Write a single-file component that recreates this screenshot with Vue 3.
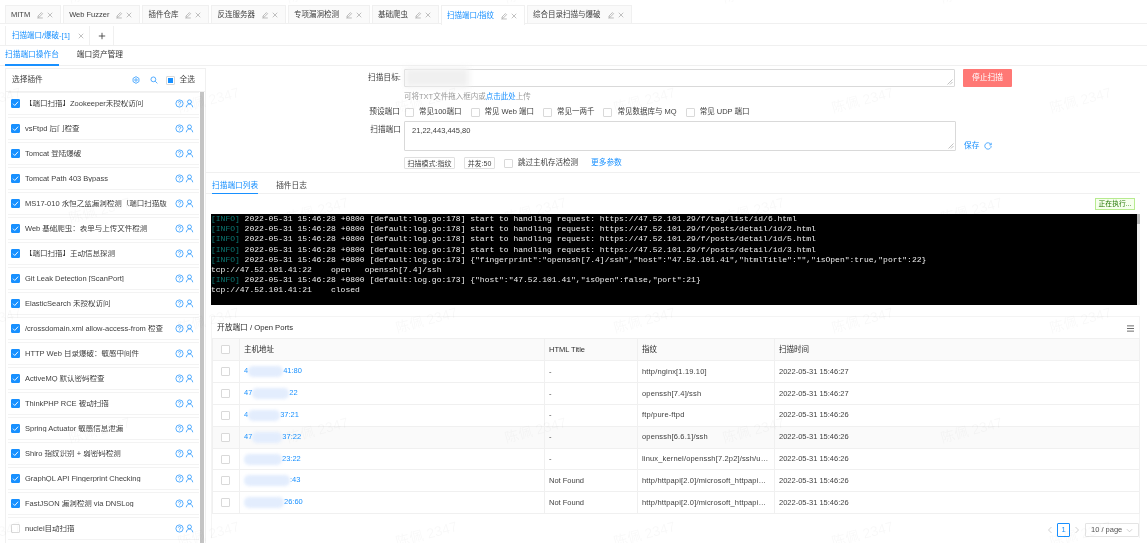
<script setup>
const navTabs = [
  { name: 'MITM' },
  { name: 'Web Fuzzer' },
  { name: '插件仓库' },
  { name: '反连服务器' },
  { name: '专项漏洞检测' },
  { name: '基础爬虫' },
  { name: '扫描端口/指纹', active: true },
  { name: '综合目录扫描与爆破' },
];

const plugins = [
  { name: '【端口扫描】Zookeeper未授权访问', on: true },
  { name: 'vsFtpd 后门检查', on: true },
  { name: 'Tomcat 登陆爆破', on: true },
  { name: 'Tomcat Path 403 Bypass', on: true },
  { name: 'MS17-010 永恒之蓝漏洞检测（端口扫描版', on: true },
  { name: 'Web 基础爬虫：表单与上传文件检测', on: true },
  { name: '【端口扫描】主动信息探测', on: true },
  { name: 'Git Leak Detection [ScanPort]', on: true },
  { name: 'ElasticSearch 未授权访问', on: true },
  { name: '/crossdomain.xml allow-access-from 检查', on: true },
  { name: 'HTTP Web 目录爆破：敏感中间件', on: true },
  { name: 'ActiveMQ 默认密码检查', on: true },
  { name: 'ThinkPHP RCE 被动扫描', on: true },
  { name: 'Spring Actuator 敏感信息泄漏', on: true },
  { name: 'Shiro 指纹识别 + 弱密码检测', on: true },
  { name: 'GraphQL API Fingerprint Checking', on: true },
  { name: 'FastJSON 漏洞检测 via DNSLog', on: true },
  { name: 'nuclei自动扫描', on: false },
];

const presets = ['常见100端口', '常见 Web 端口', '常见一两千', '常见数据库与 MQ', '常见 UDP 端口'];

const logHead = '2022-05-31 15:46:28 +0800 ';
const logs = [
  { info: true, text: logHead + '[default:log.go:178] start to handling request: https://47.52.101.29/f/tag/list/id/6.html' },
  { info: true, text: logHead + '[default:log.go:178] start to handling request: https://47.52.101.29/f/posts/detail/id/2.html' },
  { info: true, text: logHead + '[default:log.go:178] start to handling request: https://47.52.101.29/f/posts/detail/id/5.html' },
  { info: true, text: logHead + '[default:log.go:178] start to handling request: https://47.52.101.29/f/posts/detail/id/3.html' },
  { info: true, text: logHead + '[default:log.go:173] {"fingerprint":"openssh[7.4]/ssh","host":"47.52.101.41","htmlTitle":"","isOpen":true,"port":22}' },
  { text: 'tcp://47.52.101.41:22    open   openssh[7.4]/ssh' },
  { info: true, text: logHead + '[default:log.go:173] {"host":"47.52.101.41","isOpen":false,"port":21}' },
  { text: 'tcp://47.52.101.41:21    closed' },
];

const ports = [
  { pre: '4', blob: 35, post: '41:80', title: '-', fp: 'http/nginx[1.19.10]', time: '2022-05-31 15:46:27' },
  { pre: '47', blob: 37, post: '22', title: '-', fp: 'openssh[7.4]/ssh', time: '2022-05-31 15:46:27' },
  { pre: '4', blob: 32, post: '37:21', title: '-', fp: 'ftp/pure-ftpd', time: '2022-05-31 15:46:26' },
  { pre: '47', blob: 30, post: '37:22', title: '-', fp: 'openssh[6.6.1]/ssh', time: '2022-05-31 15:46:26', hover: true },
  { pre: '', blob: 38, post: '23:22', title: '-', fp: 'linux_kernel/openssh[7.2p2]/ssh/ubuntu', time: '2022-05-31 15:46:26' },
  { pre: '', blob: 46, post: ':43', title: 'Not Found', fp: 'http/httpapi[2.0]/microsoft_httpapi_httpd', time: '2022-05-31 15:46:26' },
  { pre: '', blob: 40, post: '26:60', title: 'Not Found', fp: 'http/httpapi[2.0]/microsoft_httpapi_httpd', time: '2022-05-31 15:46:26' },
];

// watermark tiles, every other row is shifted by half a tile
const marks = [];
[-17, 93, 203, 313, 423, 527].forEach((y, row) => {
  const start = row % 2 === 0 ? -150 : -41;
  for (let x = start; x < 1147; x += 218) marks.push({ x, y });
});
</script>

<template>
  <div class="page">
    <div class="nav-tabs">
      <div v-for="tab in navTabs" :key="tab.name" class="nav-tab" :class="{ active: tab.active }">
        <span class="nav-name">{{ tab.name }}</span>
        <svg class="ic-edit" viewBox="0 0 10 10"><path d="M1.5 8.7h7M2.5 6.3 6.8 2l1.4 1.4-4.3 4.3H2.5z" /></svg>
        <svg class="ic-close" viewBox="0 0 8 8"><path d="M1 1l6 6M7 1 1 7" /></svg>
      </div>
    </div>

    <div class="sub-tabs">
      <div class="sub-tab">
        <span>扫描端口/爆破-[1]</span>
        <svg class="ic-close" viewBox="0 0 8 8"><path d="M1 1l6 6M7 1 1 7" /></svg>
      </div>
      <div class="sub-add">
        <svg viewBox="0 0 8 8"><path d="M4 .8v6.4M.8 4h6.4" /></svg>
      </div>
    </div>

    <div class="inner-tabs">
      <div class="inner-tab active">扫描端口操作台</div>
      <div class="inner-tab">端口资产管理</div>
    </div>

    <div class="body">
      <aside class="plugins">
        <div class="plugins-head">
          <span class="plugins-title">选择插件</span>
          <svg class="ic-gear" viewBox="0 0 10 10"><path d="M5 .8 8.7 3v4L5 9.2 1.3 7V3z" /><circle cx="5" cy="5" r="1.5" /></svg>
          <svg class="ic-search" viewBox="0 0 10 10"><circle cx="4.2" cy="4.2" r="3" /><path d="M6.5 6.5 9.2 9.2" /></svg>
          <span class="check partial"></span>
          <span class="all">全选</span>
        </div>
        <div class="plugins-body">
          <div class="plugin-list">
            <div v-for="p in plugins" :key="p.name" class="plugin">
              <span class="check" :class="{ on: p.on }">
                <svg v-if="p.on" viewBox="0 0 10 10"><path d="M2.2 5.2 4.2 7.2 7.9 3" /></svg>
              </span>
              <span class="plugin-name">{{ p.name }}</span>
              <svg class="ic-help" viewBox="0 0 10 10"><circle cx="5" cy="5" r="4" /><path d="M3.7 4c.1-1.7 2.7-1.7 2.7 0 0 1-1.4 1-1.4 2.2M5 7.2v.4" /></svg>
              <svg class="ic-user" viewBox="0 0 10 10"><circle cx="5" cy="3.2" r="2.2" /><path d="M1.4 9.2C1.8 6.6 3.2 5.6 5 5.6s3.2 1 3.6 3.6" /></svg>
            </div>
          </div>
          <div class="plugin-scroll"></div>
        </div>
      </aside>

      <main class="main">
        <section class="form">
          <div class="row row-target">
            <label class="lbl">扫描目标:</label>
            <div class="input target">
              <span class="target-blob"></span>
              <svg class="grip" viewBox="0 0 6 6"><path d="M5.5.5l-5 5M5.5 3l-2.5 2.5" /></svg>
            </div>
            <button class="stop">停止扫描</button>
          </div>
          <div class="hint">可将TXT文件拖入框内或<a>点击此处</a>上传</div>
          <div class="row row-preset">
            <label class="lbl">预设端口</label>
            <div v-for="name in presets" :key="name" class="preset">
              <span class="check"></span>
              <span>{{ name }}</span>
            </div>
          </div>
          <div class="row row-ports">
            <label class="lbl">扫描端口</label>
            <div class="input ports">
              21,22,443,445,80
              <svg class="grip" viewBox="0 0 6 6"><path d="M5.5.5l-5 5M5.5 3l-2.5 2.5" /></svg>
            </div>
            <a class="save">保存</a>
            <svg class="ic-reload" viewBox="0 0 10 10"><path d="M8.6 3.2A4 4 0 1 0 9 5" /><path d="M9 1v2.6H6.6" /></svg>
          </div>
          <div class="row row-opts">
            <span class="tag-btn mode">扫描模式:指纹</span>
            <span class="tag-btn conc">并发:50</span>
            <span class="check skip-check"></span>
            <span class="skip">跳过主机存活检测</span>
            <a class="more">更多参数</a>
          </div>
        </section>

        <div class="result-tabs">
          <div class="result-tab active">扫描端口列表</div>
          <div class="result-tab">插件日志</div>
        </div>

        <div class="status"><span class="running">正在执行...</span></div>

        <div class="term-wrap">
          <div class="term">
            <div v-for="(l, i) in logs" :key="i" class="term-line"><span v-if="l.info" class="term-info">[INFO] </span>{{ l.text }}</div>
          </div>
          <div class="term-scroll"><span></span></div>
        </div>

        <section class="card">
          <div class="card-head">
            <span>开放端口 / Open Ports</span>
            <svg class="ic-menu" viewBox="0 0 10 8"><path d="M1 1h8M1 4h8M1 7h8" /></svg>
          </div>
          <table class="grid">
            <colgroup>
              <col style="width: 27px" />
              <col style="width: 305px" />
              <col style="width: 93px" />
              <col style="width: 137px" />
              <col />
            </colgroup>
            <thead>
              <tr>
                <th><span class="check"></span></th>
                <th>主机地址</th>
                <th>HTML Title</th>
                <th>指纹</th>
                <th>扫描时间</th>
              </tr>
            </thead>
            <tbody>
              <tr v-for="(r, i) in ports" :key="i" :class="{ hover: r.hover }">
                <td><span class="check"></span></td>
                <td class="host">{{ r.pre }}<span class="blob" :style="{ width: r.blob + 'px' }"></span>{{ r.post }}</td>
                <td>{{ r.title }}</td>
                <td class="fp">{{ r.fp }}</td>
                <td>{{ r.time }}</td>
              </tr>
            </tbody>
          </table>
          <div class="pager">
            <svg class="ic-page" viewBox="0 0 6 8"><path d="M4.5 1 1.5 4l3 3" /></svg>
            <span class="page-no">1</span>
            <svg class="ic-page" viewBox="0 0 6 8"><path d="M1.5 1l3 3-3 3" /></svg>
            <div class="page-size">
              <span>10 / page</span>
              <svg viewBox="0 0 8 5"><path d="M1 1l3 3 3-3" /></svg>
            </div>
          </div>
        </section>
      </main>
    </div>

    <div class="marks">
      <span v-for="(m, i) in marks" :key="i" class="mark" :style="{ left: m.x + 'px', top: m.y + 'px' }">陈佩 2347</span>
    </div>
  </div>
</template>

<style scoped>
.page {
  position: relative;
  width: 1147px;
  height: 543px;
  overflow: hidden;
  background: #fff;
  color: rgba(0, 0, 0, 0.78);
  font-family: "Liberation Sans", "Noto Sans CJK SC", sans-serif;
  font-size: 7.5px;
  line-height: 1;
  filter: blur(0.25px);
}

svg {
  fill: none;
  stroke: currentColor;
  flex: none;
}

a {
  color: #1890ff;
}

.nav-tabs {
  display: flex;
  gap: 2px;
  height: 24px;
  padding: 5px 0 0 5px;
  box-sizing: border-box;
  border-bottom: 1px solid #f0f0f0;
}

.nav-tab {
  display: flex;
  align-items: center;
  padding: 0 7px 0 5px;
  background: #fafafa;
  border: 1px solid #f0f0f0;
  border-bottom: 0;
  color: rgba(0, 0, 0, 0.78);
}

.nav-tab.active {
  background: #fff;
  color: #1890ff;
  height: 19px;
}

.nav-name {
  margin-right: 6px;
}

.ic-edit {
  width: 8px;
  height: 8px;
  margin-right: 3px;
  color: #999;
  stroke-width: 0.8;
}

.ic-close {
  width: 6px;
  height: 6px;
  color: #999;
  stroke-width: 0.8;
}

.sub-tabs {
  display: flex;
  gap: 1px;
  height: 22px;
  padding: 2px 0 0 5px;
  border-bottom: 1px solid #f0f0f0;
  box-sizing: border-box;
}

.sub-tab {
  display: flex;
  align-items: center;
  gap: 8px;
  width: 85px;
  padding-left: 6px;
  box-sizing: border-box;
  color: #1890ff;
  border: 1px solid #f0f0f0;
  border-width: 0 1px;
}

.sub-add {
  display: flex;
  align-items: center;
  justify-content: center;
  width: 22px;
  color: #333;
  border-right: 1px solid #f0f0f0;
}

.sub-add svg {
  width: 8px;
  height: 8px;
  stroke-width: 0.8;
}

.inner-tabs {
  display: flex;
  height: 20px;
  padding-left: 5px;
  gap: 18px;
  box-sizing: border-box;
  border-bottom: 1px solid #f0f0f0;
}

.inner-tab {
  display: flex;
  align-items: center;
  font-size: 7.7px;
  color: rgba(0, 0, 0, 0.82);
  padding-bottom: 1px;
}

.inner-tab.active {
  color: #1890ff;
  border-bottom: 2px solid #1890ff;
  margin-bottom: -1px;
  padding-bottom: 0;
}

.body {
  display: flex;
  height: 477px;
  padding-top: 2px;
  box-sizing: border-box;
}

.check {
  display: inline-flex;
  align-items: center;
  justify-content: center;
  flex: none;
  width: 9px;
  height: 9px;
  box-sizing: border-box;
  border: 1px solid #d9d9d9;
  border-radius: 1px;
  background: #fff;
}

.check.on {
  background: #1890ff;
  border-color: #1890ff;
}

.check svg {
  width: 9px;
  height: 9px;
  color: #fff;
  stroke-width: 1;
}

.check.partial::after {
  content: "";
  width: 5px;
  height: 5px;
  background: #1890ff;
}

.plugins {
  width: 201px;
  margin-left: 5px;
  box-sizing: border-box;
  border: 1px solid #f0f0f0;
  border-bottom: 0;
  flex: none;
}

.plugins-head {
  display: flex;
  align-items: center;
  height: 22px;
  padding: 0 10px 0 6px;
  border-bottom: 1px solid #f0f0f0;
}

.plugins-title {
  flex: 1;
  font-size: 7.7px;
}

.ic-gear {
  width: 8px;
  height: 8px;
  margin-right: 10px;
  color: #1890ff;
  stroke-width: 0.9;
}

.ic-search {
  width: 8px;
  height: 8px;
  margin-right: 8px;
  color: #1890ff;
  stroke-width: 0.9;
}

.all {
  margin-left: 5px;
  font-size: 7.7px;
}

.plugins-body {
  display: flex;
  padding-left: 2px;
}

.plugin-list {
  width: 191px;
}

.plugin {
  display: flex;
  align-items: center;
  height: 23px;
  margin-bottom: 2px;
  padding: 0 5px 0 3px;
  box-sizing: border-box;
  border: 1px solid #f3f3f3;
  border-width: 1px 0;
}

.plugin-name {
  flex: 1;
  min-width: 0;
  margin: 0 5px;
  white-space: nowrap;
  overflow: hidden;
}

.ic-help,
.ic-user {
  width: 9px;
  height: 9px;
  color: #1890ff;
  stroke-width: 0.8;
}

.ic-help {
  margin-right: 1px;
}

.plugin-scroll {
  width: 4px;
  height: 452px;
  margin-left: 1px;
  background: #c4c4c4;
}

.main {
  flex: 1;
  min-width: 0;
  padding-right: 7px;
}

.form {
  height: 105px;
  box-sizing: border-box;
  border-bottom: 1px solid #f0f0f0;
}

.row {
  display: flex;
  align-items: center;
}

.lbl {
  width: 195px;
  margin-right: 3px;
  text-align: right;
  flex: none;
  font-size: 7.7px;
}

.input {
  position: relative;
  box-sizing: border-box;
  border: 1px solid #d9d9d9;
  border-radius: 1px;
  background: #fff;
}

.grip {
  position: absolute;
  right: 1px;
  bottom: 1px;
  width: 6px;
  height: 6px;
  color: #999;
  stroke-width: 0.6;
}

.row-target {
  height: 18px;
  padding-top: 1px;
}

.target {
  width: 551px;
  height: 18px;
  margin-top: -1px;
}

.target-blob {
  position: absolute;
  left: 0;
  top: -2px;
  width: 64px;
  height: 19px;
  background: #f0f0f0;
  filter: blur(3px);
}

.stop {
  width: 49px;
  height: 18px;
  margin: -1px 0 0 8px;
  padding: 0;
  border: 0;
  border-radius: 1px;
  background: #ff7875;
  color: #fff;
  font: inherit;
  font-size: 7.7px;
}

.hint {
  margin: 5px 0 0 198px;
  height: 9px;
  padding-top: 1px;
  box-sizing: border-box;
  color: rgba(0, 0, 0, 0.42);
}

.row-preset {
  margin-top: 6px;
  height: 10px;
}

.preset {
  display: flex;
  align-items: center;
  gap: 5px;
  margin-right: 9px;
}

.row-preset .lbl {
  margin-right: 4px;
  padding-right: 1px;
  width: 194px;
}

.row-ports {
  margin-top: 4px;
  align-items: flex-start;
}

.row-ports .lbl {
  margin-top: 5px;
}

.ports {
  width: 552px;
  height: 30px;
  padding: 5px 7px;
}

.save {
  margin: 21px 0 0 8px;
  font-size: 7.7px;
}

.ic-reload {
  width: 8px;
  height: 8px;
  margin: 21px 0 0 5px;
  color: #1890ff;
  stroke-width: 0.9;
}

.row-opts {
  margin: 6px 0 0 198px;
}

.tag-btn {
  display: flex;
  align-items: center;
  justify-content: center;
  height: 12px;
  box-sizing: border-box;
  border: 1px solid #e0e0e0;
  border-radius: 1px;
  font-size: 7px;
}

.mode {
  width: 51px;
}

.conc {
  width: 31px;
  margin-left: 9px;
}

.skip-check {
  margin-left: 9px;
}

.skip {
  margin-left: 5px;
}

.more {
  margin-left: 13px;
  font-size: 7.7px;
}

.result-tabs {
  display: flex;
  gap: 18px;
  height: 21px;
  padding-left: 6px;
  box-sizing: border-box;
  border-bottom: 1px solid #f0f0f0;
}

.result-tab {
  display: flex;
  align-items: center;
  padding: 5px 0 0;
  font-size: 7.7px;
}

.result-tab.active {
  color: #1890ff;
  border-bottom: 1px solid #1890ff;
  margin-bottom: -1px;
}

.status {
  display: flex;
  justify-content: flex-end;
  align-items: center;
  height: 20px;
  padding-right: 5px;
}

.running {
  width: 40px;
  height: 12px;
  box-sizing: border-box;
  display: flex;
  align-items: center;
  justify-content: center;
  border: 1px solid #b7eb8f;
  background: #f6ffed;
  color: #237804;
  font-size: 6.8px;
}

.term-wrap {
  display: flex;
  height: 91px;
  margin-left: 5px;
}

.term {
  flex: 1;
  padding-top: 0;
  background: #000;
  color: #eee;
  font-family: "Liberation Mono", monospace;
  font-size: 8px;
  line-height: 10.2px;
  white-space: pre;
  overflow: hidden;
}

.term-info {
  color: #0b7a75;
}

.term-scroll {
  width: 3px;
  background: #f1f1f1;
}

.term-scroll span {
  display: block;
  height: 10px;
  background: #bbb;
}

.card {
  margin: 11px 0 0 5px;
  border: 1px solid #f4f4f4;
  border-bottom: 0;
}

.card-head {
  display: flex;
  align-items: center;
  justify-content: space-between;
  height: 21px;
  padding: 1px 5px 0;
  box-sizing: border-box;
  font-size: 7.7px;
  color: rgba(0, 0, 0, 0.85);
}

.ic-menu {
  width: 9px;
  height: 7px;
  stroke-width: 0.9;
  color: #444;
  margin-right: -1px;
}

.grid {
  width: 928px;
  table-layout: fixed;
  border-collapse: collapse;
}

.grid th,
.grid td {
  height: 21.9px;
  padding: 0 4px;
  box-sizing: border-box;
  text-align: left;
  font-weight: normal;
  border: 1px solid #f0f0f0;
  white-space: nowrap;
  overflow: hidden;
  text-overflow: ellipsis;
}

.grid th {
  height: 22px;
  background: #fafafa;
  color: rgba(0, 0, 0, 0.85);
}

.grid tr th:first-child,
.grid tr td:first-child {
  padding-left: 8px;
}

.grid .check {
  vertical-align: middle;
}

.grid tr.hover td {
  background: #fafafa;
}

.host {
  color: #1890ff;
}

.fp {
  letter-spacing: 0.16px;
}

.blob {
  display: inline-block;
  height: 11px;
  vertical-align: middle;
  background: #e3edfd;
  border-radius: 5px;
  filter: blur(1.5px);
}

.pager {
  display: flex;
  align-items: center;
  justify-content: flex-end;
  height: 16px;
  margin-top: 8px;
  color: rgba(0, 0, 0, 0.7);
}

.ic-page {
  width: 6px;
  height: 8px;
  color: #c4c4c4;
  stroke-width: 0.8;
}

.page-no {
  display: flex;
  align-items: center;
  justify-content: center;
  width: 13px;
  height: 14px;
  margin: 0 4px;
  box-sizing: border-box;
  border: 1px solid #1890ff;
  border-radius: 1px;
  color: #1890ff;
}

.page-size {
  display: flex;
  align-items: center;
  justify-content: space-between;
  width: 54px;
  height: 14px;
  margin-left: 5px;
  padding: 0 5px;
  box-sizing: border-box;
  border: 1px solid #e4e4e4;
  border-radius: 1px;
}

.page-size svg {
  width: 7px;
  height: 5px;
  color: #bbb;
  stroke-width: 0.8;
}

.marks {
  position: absolute;
  inset: 0;
  pointer-events: none;
  overflow: hidden;
}

.mark {
  position: absolute;
  font-size: 14px;
  color: rgba(0, 0, 0, 0.028);
  white-space: nowrap;
  transform: rotate(-15deg);
}
</style>
